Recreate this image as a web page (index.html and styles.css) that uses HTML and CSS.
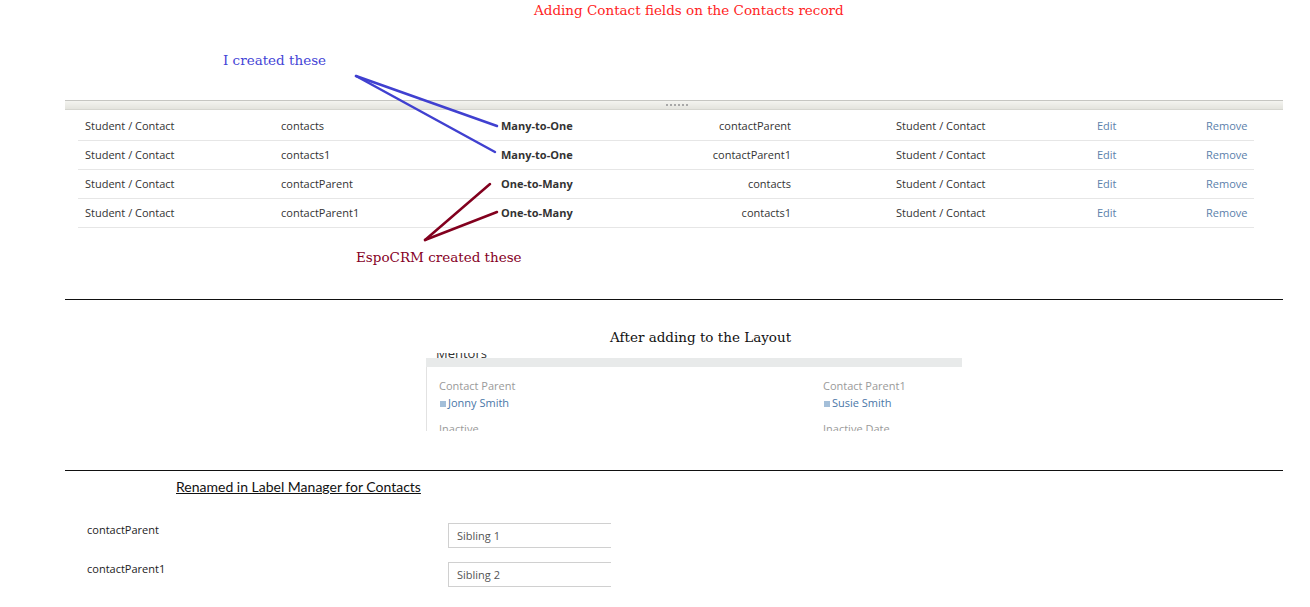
FILE: index.html
```html
<!DOCTYPE html>
<html lang="en">
<head>
  <meta charset="UTF-8">
  <title>Contact relationships</title>
  <link rel="stylesheet" href="styles.css">
</head>
<body>
  <svg class="arrows" width="1310" height="607" viewBox="0 0 1310 607">
    <g stroke="#4040d0" stroke-width="2.5" stroke-linecap="round" fill="none">
      <path d="M356 76 L497 126"/>
      <path d="M356 76 L495 152"/>
    </g>
    <g stroke="#82001e" stroke-width="2.5" stroke-linecap="round" fill="none">
      <path d="M425 240 L490 184"/>
      <path d="M425 240 L497 212"/>
    </g>
  </svg>

  <h1 class="title">Adding Contact fields on the Contacts record</h1>
  <p class="note note-blue">I created these</p>

  <div class="splitter"><span class="grip"></span></div>

  <div class="rel-table">
    <div class="rel-row">
      <span>Student / Contact</span><span>contacts</span><span class="type">Many-to-One</span>
      <span class="foreign">contactParent</span><span class="entity">Student / Contact</span>
      <a href="#">Edit</a><a href="#">Remove</a>
    </div>
    <div class="rel-row">
      <span>Student / Contact</span><span>contacts1</span><span class="type">Many-to-One</span>
      <span class="foreign">contactParent1</span><span class="entity">Student / Contact</span>
      <a href="#">Edit</a><a href="#">Remove</a>
    </div>
    <div class="rel-row">
      <span>Student / Contact</span><span>contactParent</span><span class="type">One-to-Many</span>
      <span class="foreign">contacts</span><span class="entity">Student / Contact</span>
      <a href="#">Edit</a><a href="#">Remove</a>
    </div>
    <div class="rel-row">
      <span>Student / Contact</span><span>contactParent1</span><span class="type">One-to-Many</span>
      <span class="foreign">contacts1</span><span class="entity">Student / Contact</span>
      <a href="#">Edit</a><a href="#">Remove</a>
    </div>
  </div>

  <p class="note note-red">EspoCRM created these</p>

  <div class="divider"></div>

  <h2 class="caption">After adding to the Layout</h2>

  <div class="panel">
    <div class="panel-heading"><span class="panel-title">Mentors</span></div>
    <div class="panel-body">
      <div class="field-col">
        <div class="field-label">Contact Parent</div>
        <div class="field-value"><span class="sq"></span>Jonny Smith</div>
        <div class="field-label field-next">Inactive</div>
      </div>
      <div class="field-col">
        <div class="field-label">Contact Parent1</div>
        <div class="field-value"><span class="sq"></span>Susie Smith</div>
        <div class="field-label field-next">Inactive Date</div>
      </div>
    </div>
  </div>

  <div class="divider divider-low"></div>

  <h3 class="renamed">Renamed in Label Manager for Contacts</h3>

  <div class="label-list">
    <div class="label-row">
      <div class="label-name">contactParent</div>
      <div class="label-input">Sibling 1</div>
    </div>
    <div class="label-row">
      <div class="label-name">contactParent1</div>
      <div class="label-input">Sibling 2</div>
    </div>
  </div>
</body>
</html>
```

FILE: styles.css
```css
body {
  margin: 0;
  position: relative;
  background: #fff;
  font-family: "Open Sans", sans-serif;
  font-size: 11px;
  color: #333;
}

.arrows {
  position: absolute;
  top: 0;
  left: 0;
  pointer-events: none;
}

.title,
.note,
.caption {
  margin: 0;
  font-family: "DejaVu Serif", serif;
  font-weight: normal;
  font-size: 13.5px;
  line-height: 20px;
}

.title {
  padding-left: 534px;
  color: #ff2424;
}

.note-blue {
  margin-top: 30px;
  padding-left: 223px;
  color: #4545d6;
}

.note-red {
  margin-top: 19px;
  padding-left: 356px;
  color: #86001f;
}

.splitter {
  margin: 30px 0 0 65px;
  width: 1218px;
  height: 10px;
  box-sizing: border-box;
  border-top: 1px solid #c6c6c2;
  border-bottom: 1px solid #d6d6d0;
  background: linear-gradient(#f4f4f0, #e4e4de);
  display: flex;
  align-items: center;
  justify-content: center;
}

.grip {
  width: 23px;
  height: 2px;
  margin-left: 7px;
  background: repeating-linear-gradient(to right, #a8a8a8 0 2px, transparent 2px 4px);
}

.rel-table {
  margin: 2px 0 0 78px;
  width: 1176px;
}

.rel-row {
  display: grid;
  grid-template-columns: 196px 220px 106px 198px 292px 109px 1fr;
  align-items: center;
  height: 29px;
  padding-bottom: 1px;
  box-sizing: border-box;
  border-bottom: 1px solid #e6e6e6;
}

.rel-row > * {
  padding-left: 7px;
  white-space: nowrap;
}

.rel-row .type {
  font-weight: bold;
}

.rel-row .foreign {
  text-align: right;
  padding: 0 7px 0 0;
}

.rel-row .entity {
  padding-left: 98px;
}

.rel-row a {
  color: #5b81ab;
  text-decoration: none;
}

.divider {
  margin: 32px 0 0 65px;
  width: 1218px;
  border-top: 1px solid #111;
}

.divider-low {
  margin-top: 39px;
}

.caption {
  margin-top: 27px;
  padding-left: 610px;
  color: #111;
}

.panel {
  margin: 6px 0 0 426px;
  width: 536px;
  height: 78px;
  overflow: hidden;
}

.panel-heading {
  height: 14px;
  overflow: hidden;
  background: linear-gradient(#fff 5px, #e8eaea 5px);
}

.panel-title {
  display: block;
  margin: -8px 0 0 10px;
  font-size: 13px;
  line-height: 16px;
  color: #333;
}

.panel-body {
  display: grid;
  grid-template-columns: 384px 1fr;
  padding: 11px 0 0 12px;
  height: 100px;
  border-left: 1px solid #e2e2e2;
}

.field-label {
  line-height: 16px;
  color: #9a9a9a;
}

.field-value {
  margin-top: 1px;
  line-height: 16px;
  color: #4a77a8;
  display: flex;
  align-items: center;
}

.sq {
  width: 6px;
  height: 6px;
  margin: 1px 2px 0 1px;
  background: #a4bfd9;
}

.field-next {
  margin-top: 10px;
}

.renamed {
  margin: 7px 0 0 176px;
  font-family: Lato, sans-serif;
  font-size: 14px;
  font-weight: normal;
  line-height: 18px;
  color: #111;
  text-decoration: underline;
}

.label-list {
  margin-top: 27px;
  display: flex;
  flex-direction: column;
  gap: 14px;
}

.label-row {
  display: flex;
  align-items: flex-start;
}

.label-name {
  width: 448px;
  box-sizing: border-box;
  padding-left: 87px;
  line-height: 14px;
  color: #222;
}

.label-input {
  width: 163px;
  height: 25px;
  box-sizing: border-box;
  border: 1px solid #d0d0d0;
  border-right: none;
  padding-left: 8px;
  line-height: 23px;
  color: #555;
}
```
